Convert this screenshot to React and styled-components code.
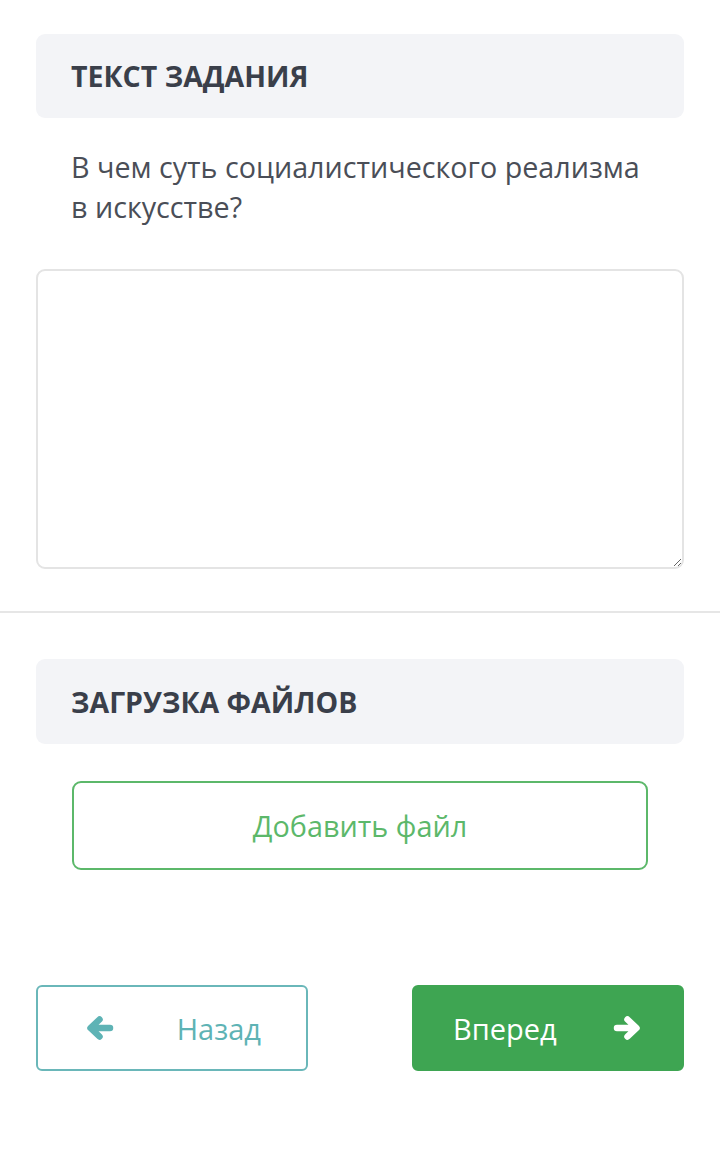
import React from "react";
import styled, { createGlobalStyle } from "styled-components";

const Global = createGlobalStyle`
  html, body { margin: 0; padding: 0; background: #fff; }
  body { font-family: "Open Sans", "Noto Sans", sans-serif; }
  * { box-sizing: border-box; }
`;

const Page = styled.div`
  width: 720px;
  padding-top: 34px;
  padding-bottom: 90px;
`;

const Section = styled.section`
  padding: 0 36px;
  margin-top: ${p => p.$top || 0}px;
`;

const Header = styled.div`
  background: #f3f4f7;
  border-radius: 9px;
  height: ${p => p.$h || 84}px;
  display: flex;
  align-items: center;
  padding: 0 35px;
  font-size: 28.5px;
  font-weight: 700;
  color: #3a3f4a;
`;

const Question = styled.p`
  margin: 29px 0 0;
  padding: 0 35px;
  font-size: 28.7px;
  line-height: 40px;
  color: #4a4e57;
`;

const Answer = styled.textarea`
  display: block;
  width: 100%;
  height: 300px;
  margin-top: 42px;
  border: 2px solid #e4e4e4;
  border-radius: 9px;
  resize: vertical;
  font-family: inherit;
  font-size: 20px;
  outline: none;
`;

const Divider = styled.hr`
  margin: 42px 0 0;
  border: 0;
  height: 2px;
  background: #e6e6e6;
`;

const AddFile = styled.button`
  display: block;
  width: calc(100% - 72px);
  margin: 37px auto 0;
  height: 89px;
  background: #fff;
  border: 2px solid #5cb86a;
  border-radius: 9px;
  color: #5cb86a;
  font-family: inherit;
  font-size: 28.8px;
`;

const Nav = styled.div`
  display: flex;
  justify-content: space-between;
  padding: 0 36px;
  margin-top: 115px;
`;

const NavButton = styled.button`
  width: 272px;
  height: 86px;
  border-radius: 6px;
  display: flex;
  align-items: center;
  justify-content: space-between;
  padding: 0 ${p => (p.$primary ? 41 : 45)}px 0 ${p => (p.$primary ? 39 : 48)}px;
  font-family: inherit;
  font-size: 29px;
  border: 2px solid ${p => (p.$primary ? "#3ea552" : "#6ab7b9")};
  background: ${p => (p.$primary ? "#3ea552" : "#fff")};
  color: ${p => (p.$primary ? "#fff" : "#5eb3b5")};
`;

const ArrowSvg = styled.svg`
  width: 28px;
  height: 26px;
  flex: none;
  transform: ${p => (p.$left ? "scaleX(-1)" : "none")};
`;

const Arrow = ({ left }) => (
  <ArrowSvg $left={left} viewBox="0 0 28 26" fill="none">
    <path
      d="M4 13 H23 M14.5 4.5 L23.5 13 L14.5 21.5"
      stroke="currentColor"
      strokeWidth="6.5"
      strokeLinecap="round"
      strokeLinejoin="round"
    />
  </ArrowSvg>
);

export default function App() {
  return (
    <Page>
      <Global />
      <Section>
        <Header>ТЕКСТ ЗАДАНИЯ</Header>
        <Question>В чем суть социалистического реализма в искусстве?</Question>
        <Answer />
      </Section>
      <Divider />
      <Section $top={46}>
        <Header $h={85}>ЗАГРУЗКА ФАЙЛОВ</Header>
        <AddFile>Добавить файл</AddFile>
      </Section>
      <Nav>
        <NavButton>
          <Arrow left />
          <span>Назад</span>
        </NavButton>
        <NavButton $primary>
          <span>Вперед</span>
          <Arrow />
        </NavButton>
      </Nav>
    </Page>
  );
}
